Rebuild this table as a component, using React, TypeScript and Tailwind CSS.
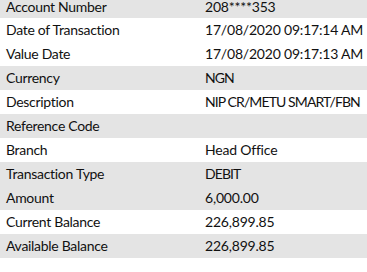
import React from "react";

const rows: { label: string; value: string; shaded: boolean; caps?: boolean }[] = [
  { label: "Account Number", value: "208****353", shaded: true },
  { label: "Date of Transaction", value: "17/08/2020 09:17:14 AM", shaded: false },
  { label: "Value Date", value: "17/08/2020 09:17:13 AM", shaded: false },
  { label: "Currency", value: "NGN", shaded: true, caps: true },
  { label: "Description", value: "NIP CR/METU SMART/FBN", shaded: false, caps: true },
  { label: "Reference Code", value: "", shaded: true },
  { label: "Branch", value: "Head Office", shaded: false },
  { label: "Transaction Type", value: "DEBIT", shaded: true, caps: true },
  { label: "Amount", value: "6,000.00", shaded: true },
  { label: "Current Balance", value: "226,899.85", shaded: false },
  { label: "Available Balance", value: "226,899.85", shaded: true },
];

const App: React.FC = () => {
  return (
    <div
      className="w-[367px] h-[272px] overflow-hidden bg-white text-[#111] text-[14px] leading-[16px]"
      style={{ fontFamily: "Lato, 'Open Sans', sans-serif" }}
    >
      {rows.map((row, i) => (
        <div
          key={row.label}
          className={`flex items-center ${i === 0 ? "h-[18px] pb-[5px] leading-[13px]" : "h-[24px]"} ${
            row.shaded ? "bg-[#e4e4e4]" : "bg-white"
          }`}
        >
          <span className="w-[205px] shrink-0 pl-[6px] whitespace-nowrap tracking-[-0.3px]">
            {row.label}
          </span>
          <span
            className={`whitespace-nowrap ${row.caps ? "tracking-[-0.9px]" : "tracking-[-0.2px]"}`}
          >
            {row.value}
          </span>
        </div>
      ))}
    </div>
  );
};

export default App;
